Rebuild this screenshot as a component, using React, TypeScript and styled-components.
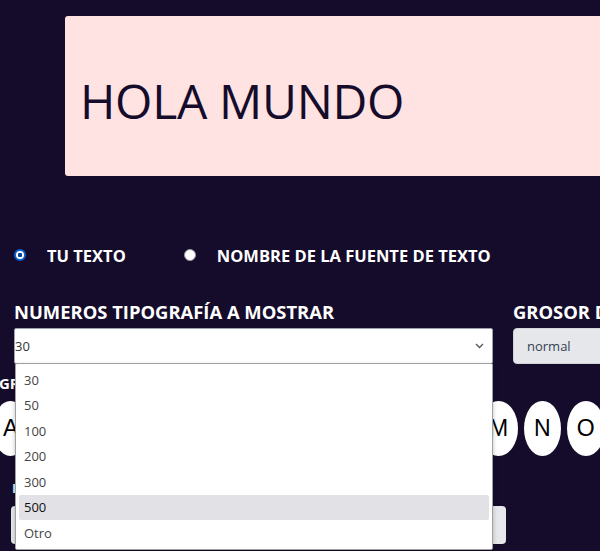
import styled, { createGlobalStyle } from "styled-components";

const GlobalStyle = createGlobalStyle`
  html, body {
    margin: 0;
    padding: 0;
    background: #150c2c;
    overflow: hidden;
  }
  body {
    font-family: "Open Sans", "Noto Sans", sans-serif;
    color: #ffffff;
  }
`;

const Page = styled.div`
  width: 600px;
  height: 551px;
  overflow: hidden;
  padding: 16px 0 0 14px;
  box-sizing: border-box;
`;

const Preview = styled.div`
  margin-left: 51px;
  width: 600px;
  height: 160px;
  background: #ffe2e2;
  border-radius: 3px;
  display: flex;
  align-items: center;
  padding: 8px 0 0 15px;
  box-sizing: border-box;
  color: #150c2c;
  font-size: 48px;
  font-weight: 400;
  letter-spacing: -0.3px;
`;

const RadioRow = styled.div`
  display: flex;
  align-items: center;
  margin-top: 70px;
  height: 18px;
`;

const RadioOption = styled.label`
  display: flex;
  align-items: center;
  gap: 21px;
  margin-right: 58px;
  font-size: 16.5px;
  font-weight: 700;
`;

const RadioDot = styled.span<{ $checked?: boolean }>`
  width: 12px;
  height: 12px;
  border-radius: 50%;
  box-sizing: border-box;
  background: ${(p) =>
    p.$checked
      ? "radial-gradient(circle, #0a3f8f 0 2px, #ffffff 2.5px)"
      : "#ffffff"};
  border: ${(p) => (p.$checked ? "2px solid #0b62d6" : "1px solid #9a9a9a")};
`;

const Fields = styled.div`
  display: flex;
  gap: 20px;
  margin-top: 37px;
`;

const Field = styled.div<{ $width: number }>`
  position: relative;
  flex: 0 0 ${(p) => p.$width}px;
`;

const FieldTitle = styled.div`
  font-size: 18.4px;
  font-weight: 700;
  height: 22px;
  line-height: 22px;
  margin-bottom: 5px;
  white-space: nowrap;
`;

const SelectBox = styled.div<{ $grey?: boolean }>`
  height: 36px;
  box-sizing: border-box;
  display: flex;
  align-items: center;
  justify-content: space-between;
  background: ${(p) => (p.$grey ? "#e5e7eb" : "#ffffff")};
  border: 1px solid ${(p) => (p.$grey ? "#d1d5db" : "#9ca3af")};
  border-radius: ${(p) => (p.$grey ? "4px" : "2px")};
  padding: ${(p) => (p.$grey ? "0 0 0 13px" : "0 8px 0 0")};
  color: #374151;
  font-size: 13px;
`;

const SelectValue = styled.span`
  color: #333333;
`;

const DropdownList = styled.ul`
  position: absolute;
  left: 1px;
  top: 62px;
  width: 478px;
  height: 187px;
  margin: 0;
  padding: 3px 3px 0;
  box-sizing: border-box;
  list-style: none;
  background: #ffffff;
  border: 1px solid #a0a0a0;
  border-radius: 2px;
  box-shadow: 0 2px 4px rgba(0, 0, 0, 0.25);
  z-index: 5;
`;

const DropdownItem = styled.li<{ $active?: boolean }>`
  height: 25.5px;
  display: flex;
  align-items: center;
  padding-left: 5px;
  font-size: 13px;
  color: ${(p) => (p.$active ? "#111111" : "#444444")};
  background: ${(p) => (p.$active ? "#e1e1e6" : "transparent")};
  border-radius: 2px;
`;

const SubTitle = styled.div`
  margin: 9px 0 0 -15px;
  font-size: 15px;
  font-weight: 700;
  height: 20px;
  line-height: 20px;
`;

const LetterRow = styled.div`
  display: flex;
  gap: 6px;
  margin: 8px 0 0 -21px;
  height: 55px;
`;

const Letter = styled.span`
  flex: 0 0 auto;
  height: 55px;
  padding: 0 10px;
  display: flex;
  align-items: center;
  justify-content: center;
  background: #ffffff;
  border-radius: 50%;
  color: #000000;
  font-family: "Liberation Sans", Arial, sans-serif;
  font-size: 23px;
`;

const SmallLabel = styled.div`
  margin: 23px 0 0 -2px;
  font-size: 13px;
  font-weight: 700;
  color: #dbeafe;
  height: 18px;
  line-height: 18px;
`;

const TextInput = styled.div`
  margin: 9px 0 0 -3px;
  width: 495px;
  height: 38px;
  background: #e5e7eb;
  border-radius: 4px;
`;

const Chevron = () => (
  <svg width="9" height="6" viewBox="0 0 9 6">
    <path d="M1 1l3.5 3.5L8 1" fill="none" stroke="#555" strokeWidth="1.3" />
  </svg>
);

const sizes = ["30", "50", "100", "200", "300", "500", "Otro"];
const letters = "ABCDEFGHIJKLMNOPQ".split("");

export default function App() {
  return (
    <>
      <GlobalStyle />
      <Page>
        <Preview>HOLA MUNDO</Preview>

        <RadioRow>
          <RadioOption>
            <RadioDot $checked />
            TU TEXTO
          </RadioOption>
          <RadioOption>
            <RadioDot />
            NOMBRE DE LA FUENTE DE TEXTO
          </RadioOption>
        </RadioRow>

        <Fields>
          <Field $width={479}>
            <FieldTitle>NUMEROS TIPOGRAFÍA A MOSTRAR</FieldTitle>
            <SelectBox>
              <SelectValue>30</SelectValue>
              <Chevron />
            </SelectBox>
            <DropdownList>
              {sizes.map((s) => (
                <DropdownItem key={s} $active={s === "500"}>
                  {s}
                </DropdownItem>
              ))}
            </DropdownList>
          </Field>
          <Field $width={200}>
            <FieldTitle>GROSOR DE LA FUENTE</FieldTitle>
            <SelectBox $grey>normal</SelectBox>
          </Field>
        </Fields>

        <SubTitle>GRUPO DE LETRAS</SubTitle>
        <LetterRow>
          {letters.map((l) => (
            <Letter key={l}>{l}</Letter>
          ))}
        </LetterRow>

        <SmallLabel>ESCRIBE TU TEXTO</SmallLabel>
        <TextInput />
      </Page>
    </>
  );
}
